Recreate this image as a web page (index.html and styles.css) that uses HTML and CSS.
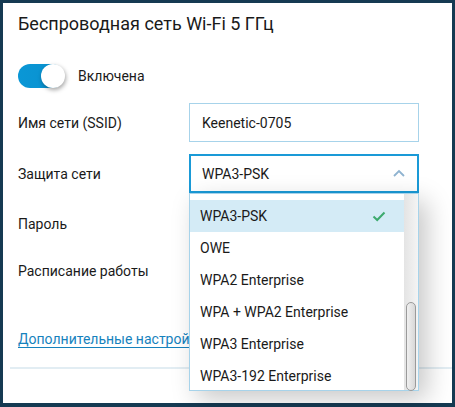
FILE: index.html
```html
<!DOCTYPE html>
<html>
<head>
<meta charset="utf-8">
<link rel="stylesheet" href="styles.css">
</head>
<body>
<div class="card">
  <h1 class="title">Беспроводная сеть Wi-Fi 5 ГГц</h1>
  <div class="toggle-row">
    <div class="toggle"><div class="knob"></div></div>
    <span class="toggle-label">Включена</span>
  </div>
  <div class="row row-ssid">
    <div class="label">Имя сети (SSID)</div>
    <div class="input">Keenetic-0705</div>
  </div>
  <div class="row row-sec">
    <div class="label">Защита сети</div>
    <div class="select">
      <span>WPA3-PSK</span>
      <svg class="chev" width="12" height="8" viewBox="0 0 12 8"><path d="M1 7 L6 2 L11 7" fill="none" stroke="#8fb3d0" stroke-width="1.8"/></svg>
    </div>
  </div>
  <div class="row row-pass">
    <div class="label">Пароль</div>
  </div>
  <div class="row row-sched">
    <div class="label">Расписание работы</div>
  </div>
  <a class="link">Дополнительные настройки</a>
  <div class="divider"></div>

  <div class="dropdown">
    <div class="list">
      <div class="item active">WPA3-PSK
        <svg class="check" width="14" height="11" viewBox="0 0 14 11"><path d="M1.5 5.5 L5.2 9 L12.5 1.5" fill="none" stroke="#3daa6e" stroke-width="2"/></svg>
      </div>
      <div class="item">OWE</div>
      <div class="item">WPA2 Enterprise</div>
      <div class="item">WPA + WPA2 Enterprise</div>
      <div class="item">WPA3 Enterprise</div>
      <div class="item">WPA3-192 Enterprise</div>
    </div>
    <div class="scrollbar"><div class="thumb"></div></div>
  </div>
</div>
</body>
</html>
```

FILE: styles.css
```css
html, body {
  margin: 0;
  padding: 0;
}
body {
  background: #153a52;
  width: 455px;
  height: 407px;
  overflow: hidden;
  font-family: Roboto, "Liberation Sans", sans-serif;
  color: #1a1a1a;
}
.card {
  position: relative;
  margin: 3px 3px 0 3px;
  height: 400px;
  background: #fff;
  padding: 0 0 0 15px;
  box-sizing: border-box;
}
.title {
  margin: 0;
  padding-top: 9px;
  font-size: 18px;
  font-weight: 400;
  line-height: 24px;
  height: 24px;
}
.toggle-row {
  display: flex;
  align-items: center;
  margin-top: 27px;
  height: 26px;
}
.toggle {
  position: relative;
  width: 46px;
  height: 24px;
  border-radius: 12px;
  background: linear-gradient(90deg, #0a97d6 0%, #0a93d1 60%, #0780b8 100%);
}
.knob {
  position: absolute;
  right: -1px;
  top: 0;
  width: 24px;
  height: 24px;
  border-radius: 50%;
  background: #fff;
  box-shadow: 1px 2px 4px rgba(0,0,0,0.35);
}
.toggle-label {
  margin-left: 14px;
  font-size: 14px;
}
.row {
  display: flex;
  align-items: center;
  height: 39px;
}
.label {
  width: 171px;
  font-size: 14px;
}
.row-ssid { margin-top: 14px; }
.row-sec { margin-top: 12px; }
.row-pass { margin-top: 11px; }
.row-sched { margin-top: 11px; height: 34px; }
.input, .select {
  box-sizing: border-box;
  width: 230px;
  height: 39px;
  display: flex;
  align-items: center;
  font-size: 14px;
}
.input {
  border: 1px solid #a7d3ea;
  padding-left: 12px;
}
.select {
  border: 2px solid #1a9ad7;
  padding: 0 12px 0 11px;
  justify-content: space-between;
}
.chev {
  margin-top: -1px;
}
.link {
  display: block;
  width: fit-content;
  margin-top: 42px;
  font-size: 14px;
  color: #1682bd;
  text-decoration: underline;
  text-underline-offset: 3px;
  text-decoration-color: #1682bd;
  line-height: 18px;
}
.divider {
  margin: 19px 0 0 -8px;
  height: 2px;
  background: #e2edf3;
}
.dropdown {
  position: absolute;
  left: 186px;
  top: 190px;
  width: 230px;
  height: 198px;
  box-sizing: border-box;
  border: 1px solid #a7d3ea;
  background: #fff;
  display: flex;
  box-shadow: 8px 8px 24px rgba(0,0,0,0.22);
}
.list {
  flex: 1;
  padding-top: 6px;
}
.item {
  height: 32px;
  display: flex;
  align-items: center;
  justify-content: space-between;
  padding: 0 18px 0 10px;
  font-size: 14px;
}
.item.active {
  background: #d4ebf6;
}
.check { margin-top: 1px; }
.scrollbar {
  position: relative;
  width: 14px;
  background: linear-gradient(90deg, #e4e4e4, #f4f4f4);
}
.thumb {
  position: absolute;
  left: 2px;
  top: 108px;
  width: 8px;
  height: 87px;
  border: 1px solid #9a9a9a;
  border-radius: 5px;
  background: linear-gradient(90deg, #f0f0f0, #d8d8d8);
}
```
